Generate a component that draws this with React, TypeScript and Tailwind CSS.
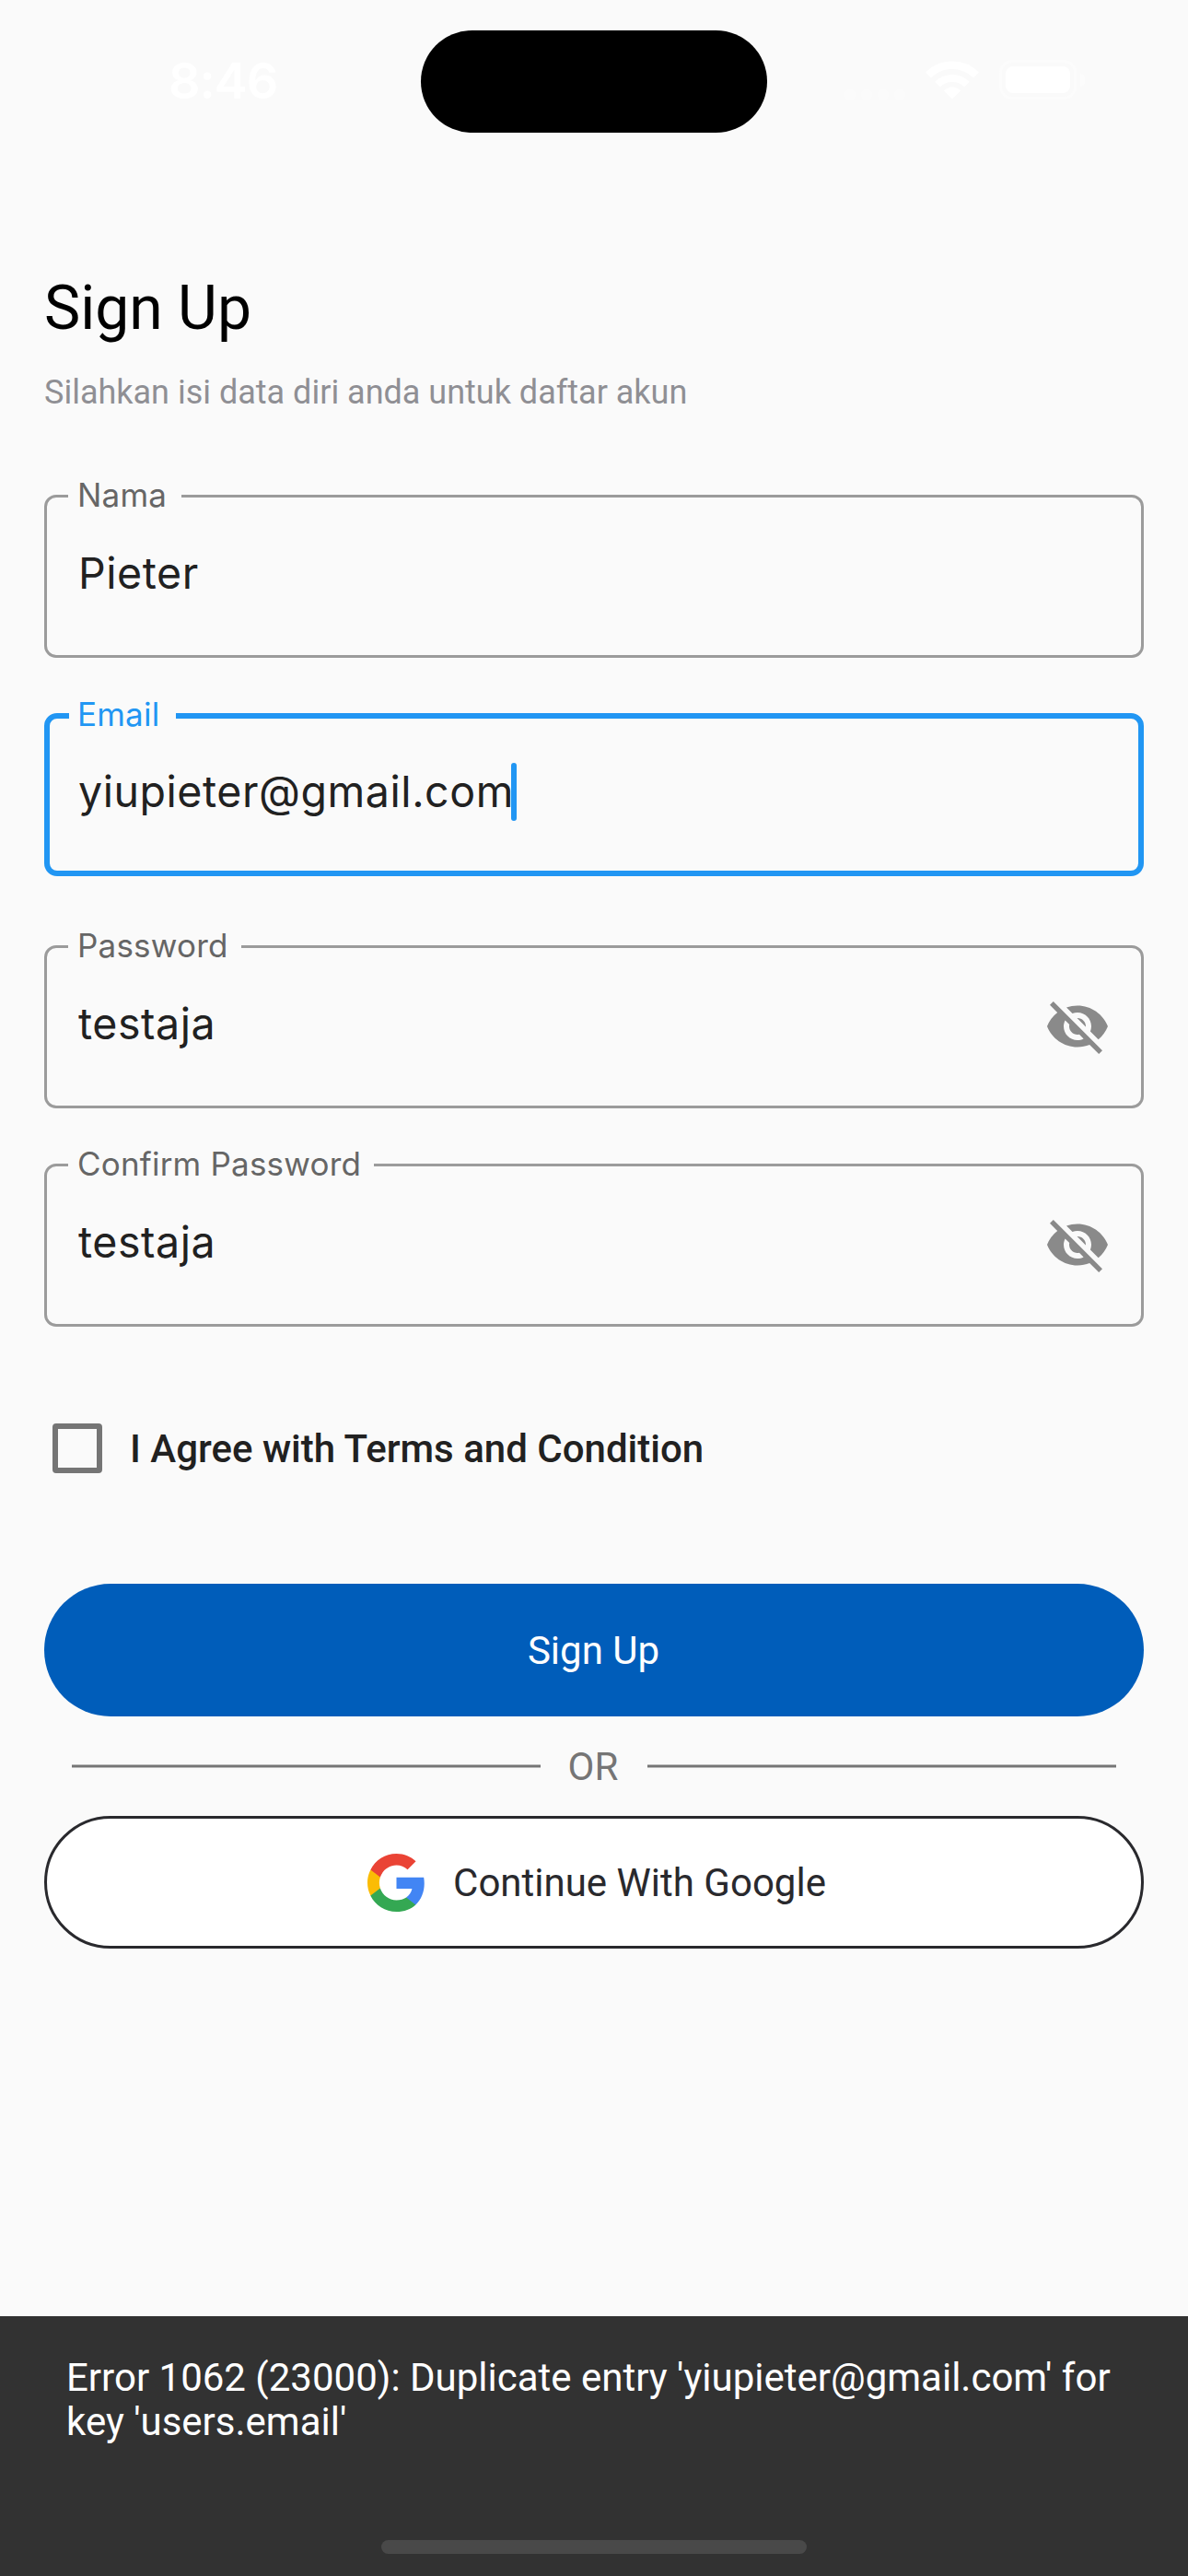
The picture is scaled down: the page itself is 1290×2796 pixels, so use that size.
import { MdVisibilityOff } from "react-icons/md";

type FieldProps = {
  label: string;
  value: string;
  labelClass: string;
  focused?: boolean;
  secret?: boolean;
};

function Field({ label, value, labelClass, focused, secret }: FieldProps) {
  return (
    <div
      className={
        focused
          ? "relative flex h-[177px] items-start justify-between rounded-[14px] border-[6px] border-[#2196f3] pl-[31px] pt-[41px]"
          : "relative flex h-[177px] items-start justify-between rounded-[13px] border-[3px] border-[#9b9b9b] pl-[34px] pt-[44px]"
      }
    >
      <span
        className={`absolute flex h-[48px] items-center bg-[#fafafa] font-[Inter,sans-serif] text-[35px] leading-[48px] tracking-[0.2px] whitespace-nowrap ${
          focused ? "-top-[29px] left-[21px] pl-[9px] text-[#2196f3]" : "-top-[27px] left-[23px] pl-[10px] text-[#666666]"
        } ${labelClass}`}
      >
        {label}
      </span>
      <div className="flex items-center">
        <span className="font-[Inter,sans-serif] text-[46.5px] leading-[76px] tracking-[0.55px] whitespace-nowrap text-[#212121]">
          {value}
        </span>
        {focused && <span className="-ml-[3px] h-[63px] w-[6px] rounded-[3px] bg-[#2196f3]" />}
      </div>
      {secret && <MdVisibilityOff className="mr-[33px] mt-[5px] size-[72px] text-[#8a8a8a]" />}
    </div>
  );
}

function StatusBar() {
  return (
    <header className="flex h-[177px] items-start justify-between pl-[183px] pr-[112px] pt-[33px]">
      <span className="mt-[23px] w-[274px] font-[Inter,sans-serif] text-[54px] leading-[64px] font-semibold tracking-[-1px] text-white">
        8:46
      </span>
      <div className="h-[111px] w-[376px] rounded-full bg-black" />
      <div className="mt-[32px] flex h-[43px] w-[345px] items-center justify-end">
        <div className="mr-[22px] mt-[32px] flex gap-[6px]">
          <i className="size-[12px] rounded-full bg-[#fbfbfb]" />
          <i className="size-[12px] rounded-full bg-[#fbfbfb]" />
          <i className="size-[12px] rounded-full bg-[#fbfbfb]" />
          <i className="size-[12px] rounded-full bg-[#fbfbfb]" />
        </div>
        <svg className="mr-[22px] h-[42px] w-[58px]" viewBox="0 0 58 42" fill="none" stroke="#fff">
          <path strokeWidth="8.500" d="M3 15.500A36.750 36.750 0 0 1 55 15.500" />
          <path strokeWidth="8" d="M13.100 25.600A22.500 22.500 0 0 1 44.900 25.600" />
          <path fill="#fff" stroke="none" d="M29 41.500L19.800 32.300A13 13 0 0 1 38.200 32.300Z" />
        </svg>
        <div className="h-[43px] w-[84px] rounded-[14px] border-[3px] border-[#fcfcfc] p-[4px]">
          <div className="h-full w-full rounded-[8px] bg-white" />
        </div>
        <div className="ml-[4px] h-[14px] w-[5px] rounded-r-full bg-[#fcfcfc]" />
      </div>
    </header>
  );
}

function GoogleLogo() {
  return (
    <svg className="h-[63px] w-[63px]" viewBox="1 1 22 22" preserveAspectRatio="none">
      <path fill="#4285F4" d="M22.560 12.250c0-.78-.07-1.530-.2-2.250H12v4.260h5.920c-.26 1.370-1.040 2.530-2.210 3.310v2.770h3.570c2.080-1.920 3.280-4.740 3.280-8.090z" />
      <path fill="#34A853" d="M12 23c2.970 0 5.460-.98 7.280-2.660l-3.570-2.770c-.98.66-2.230 1.060-3.710 1.060-2.860 0-5.290-1.930-6.160-4.530H2.180v2.840C3.990 20.530 7.700 23 12 23z" />
      <path fill="#FBBC05" d="M5.840 14.090c-.22-.66-.35-1.360-.35-2.090s.13-1.430.35-2.090V7.070H2.180C1.430 8.550 1 10.220 1 12s.43 3.450 1.180 4.930l2.850-2.220.81-.62z" />
      <path fill="#EA4335" d="M12 5.380c1.620 0 3.060.56 4.210 1.640l3.150-3.150C17.450 2.090 14.970 1 12 1 7.700 1 3.990 3.470 2.180 7.070l3.660 2.840c.87-2.600 3.300-4.530 6.160-4.530z" />
    </svg>
  );
}

export default function App() {
  return (
    <div className="flex h-[2796px] w-[1290px] flex-col bg-[#fafafa] font-[Roboto,sans-serif]">
      <StatusBar />
      <main className="flex flex-1 flex-col px-[48px] pt-[119px]">
        <h1 className="text-[66px] leading-[78px] text-black">Sign Up</h1>
        <p className="mt-[31px] text-[36px] leading-[42px] text-[#8f8f94]">Silahkan isi data diri anda untuk daftar akun</p>

        <form className="mt-[90px] flex flex-col">
          <div className="flex flex-col gap-[60px]">
            <Field label="Nama" value="Pieter" labelClass="w-[123px]" />
            <Field label="Email" value="yiupieter@gmail.com" labelClass="w-[116px]" focused />
          </div>
          <div className="mt-[75px] flex flex-col gap-[60px]">
            <Field label="Password" value="testaja" labelClass="w-[188px]" secret />
            <Field label="Confirm Password" value="testaja" labelClass="w-[332px]" secret />
          </div>

          <label className="mt-[105px] flex h-[54px] items-center pl-[9px]">
            <span className="size-[54px] rounded-[4px] border-[6px] border-[#757575]" />
            <span className="ml-[30px] mt-[2px] text-[42px] leading-[50px] font-medium text-[#212121]">
              I Agree with Terms and Condition
            </span>
          </label>

          <button
            type="button"
            className="mt-[120px] h-[144px] rounded-full bg-[#005dba] pr-[1px] pt-[2px] text-[42px] leading-[50px] text-white"
          >
            Sign Up
          </button>

          <div className="flex h-[108px] items-center px-[30px] text-[42px] leading-[50px] text-[#757575]">
            <div className="h-[4px] flex-1 border-y border-[#b8b8b8] bg-[#757575]" />
            <span className="mt-[2px] w-[116px] pr-[2px] text-center">OR</span>
            <div className="h-[4px] flex-1 border-y border-[#b8b8b8] bg-[#757575]" />
          </div>

          <button
            type="button"
            className="flex h-[144px] items-center justify-center rounded-full border-[3px] border-[#29292d] bg-white pl-[6px] text-[42px] leading-[50px] text-[#29292d]"
          >
            <GoogleLogo />
            <span className="ml-[30px] mt-[2px]">Continue With Google</span>
          </button>
        </form>
      </main>

      <footer className="flex h-[282px] flex-col justify-between bg-[#323232] px-[72px] pb-[24px] pt-[43px]">
        <p className="text-[42px] leading-[48px] text-white">
          Error 1062 (23000): Duplicate entry 'yiupieter@gmail.com' for
          <br />
          key 'users.email'
        </p>
        <div className="h-[15px] w-[462px] self-center rounded-full bg-[#494949]" />
      </footer>
    </div>
  );
}
